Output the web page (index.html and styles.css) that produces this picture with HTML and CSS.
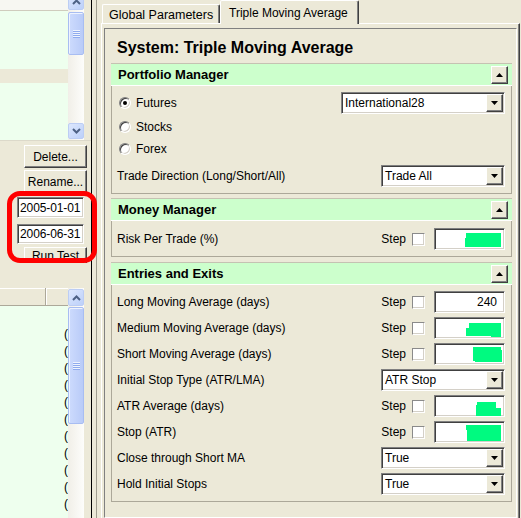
FILE: index.html
```html
<!DOCTYPE html>
<html>
<head>
<meta charset="utf-8">
<title>Triple Moving Average</title>
<link rel="stylesheet" href="styles.css">
</head>
<body>
<div class="app">
  <div class="left">
    <div class="toplist">
      <div class="listcol">
        <div class="lhead"></div>
        <div class="lgreen g1"></div>
        <div class="lgap"></div>
        <div class="lgreen grow"></div>
      </div>
      <div class="vscroll">
        <div class="sbtn cut"><svg width="9" height="6" viewBox="0 0 9 6"><path d="M1 5L4.5 1.5L8 5" fill="none" stroke="#4d6185" stroke-width="2"/></svg></div>
        <div class="thumb th1"><span class="grip"></span></div>
        <div class="grow"></div>
        <div class="sbtn down"><svg width="9" height="6" viewBox="0 0 9 6"><path d="M1 1L4.5 4.5L8 1" fill="none" stroke="#4d6185" stroke-width="2"/></svg></div>
      </div>
      <div class="lrest"></div>
    </div>
    <div class="btns">
      <button class="btn del">Delete...</button>
      <button class="btn ren">Rename...</button>
      <div class="date d1">2005-01-01</div>
      <div class="date d2">2006-06-31</div>
      <div class="runclip"><button class="btn run">Run Test</button></div>
    </div>
    <div class="botlist">
      <div class="listcol2">
        <div class="hdr"><div class="hc1"></div><div class="hc2"></div></div>
        <div class="rows">
          <div class="r">(</div><div class="r">(</div><div class="r">(</div><div class="r">(</div>
          <div class="r">(</div><div class="r">(</div><div class="r">(</div><div class="r">(</div>
          <div class="r">(</div><div class="r">(</div><div class="r">(</div>
        </div>
      </div>
      <div class="vscroll vs2">
        <div class="sbtn up2"><svg width="9" height="6" viewBox="0 0 9 6"><path d="M1 5L4.5 1.5L8 5" fill="none" stroke="#4d6185" stroke-width="2"/></svg></div>
        <div class="thumb th2"><span class="grip"></span></div>
        <div class="grow"></div>
      </div>
      <div class="lrest"></div>
    </div>
  </div>
  <div class="splitter"></div>
  <div class="right">
    <div class="tabs">
      <div class="tab">Global Parameters</div>
      <div class="tab sel">Triple Moving Average</div>
    </div>
    <div class="page">
      <div class="inner">
        <div class="title">System: Triple Moving Average</div>

        <div class="grp gp1">
          <div class="ghead"><span class="gtitle">Portfolio Manager</span><span class="cbtn"><svg width="7" height="4" viewBox="0 0 7 4"><path d="M0 4H7L3.5 0Z" fill="#000"/></svg></span></div>
          <div class="gbody">
            <div class="row pr1"><span class="radio on"></span><span class="lbl">Futures</span>
              <div class="dd wide"><span class="ddtext">International28</span><span class="ddbtn"><svg width="7" height="4" viewBox="0 0 7 4"><path d="M0 0H7L3.5 4Z" fill="#000"/></svg></span></div></div>
            <div class="row pr2"><span class="radio"></span><span class="lbl">Stocks</span></div>
            <div class="row pr3"><span class="radio"></span><span class="lbl">Forex</span></div>
            <div class="row pr4"><span class="lbl">Trade Direction (Long/Short/All)</span>
              <div class="dd"><span class="ddtext">Trade All</span><span class="ddbtn"><svg width="7" height="4" viewBox="0 0 7 4"><path d="M0 0H7L3.5 4Z" fill="#000"/></svg></span></div></div>
          </div>
        </div>

        <div class="grp gp2">
          <div class="ghead"><span class="gtitle">Money Manager</span><span class="cbtn"><svg width="7" height="4" viewBox="0 0 7 4"><path d="M0 4H7L3.5 0Z" fill="#000"/></svg></span></div>
          <div class="gbody b2">
            <div class="row"><span class="lbl">Risk Per Trade (%)</span><span class="step">Step</span><span class="cb"></span>
              <div class="inp"><svg width="69" height="20" viewBox="0 0 69 20"><path d="M31 4H66V18H30V9H31Z" fill="#00fa80"/></svg></div></div>
          </div>
        </div>

        <div class="grp gp3">
          <div class="ghead"><span class="gtitle">Entries and Exits</span><span class="cbtn"><svg width="7" height="4" viewBox="0 0 7 4"><path d="M0 4H7L3.5 0Z" fill="#000"/></svg></span></div>
          <div class="gbody b3">
            <div class="row"><span class="lbl">Long Moving Average (days)</span><span class="step">Step</span><span class="cb"></span>
              <div class="inp num">240</div></div>
            <div class="row"><span class="lbl">Medium Moving Average (days)</span><span class="step">Step</span><span class="cb"></span>
              <div class="inp"><svg width="69" height="20" viewBox="0 0 69 20"><path d="M34 5H66V19H56V18H31V10H34Z" fill="#00fa80"/></svg></div></div>
            <div class="row"><span class="lbl">Short Moving Average (days)</span><span class="step">Step</span><span class="cb"></span>
              <div class="inp"><svg width="69" height="20" viewBox="0 0 69 20"><path d="M38 3H66V6H67V18H40V17H38Z" fill="#00fa80"/></svg></div></div>
            <div class="row"><span class="lbl">Initial Stop Type (ATR/LMA)</span>
              <div class="dd"><span class="ddtext">ATR Stop</span><span class="ddbtn"><svg width="7" height="4" viewBox="0 0 7 4"><path d="M0 0H7L3.5 4Z" fill="#000"/></svg></span></div></div>
            <div class="row"><span class="lbl">ATR Average (days)</span><span class="step">Step</span><span class="cb"></span>
              <div class="inp"><svg width="69" height="20" viewBox="0 0 69 20"><path d="M42 6H61V12H66V20H41V9H42Z" fill="#00fa80"/></svg></div></div>
            <div class="row"><span class="lbl">Stop (ATR)</span><span class="step">Step</span><span class="cb"></span>
              <div class="inp"><svg width="69" height="20" viewBox="0 0 69 20"><path d="M31 3H66V19H32V8H31Z" fill="#00fa80"/></svg></div></div>
            <div class="row"><span class="lbl">Close through Short MA</span>
              <div class="dd"><span class="ddtext">True</span><span class="ddbtn"><svg width="7" height="4" viewBox="0 0 7 4"><path d="M0 0H7L3.5 4Z" fill="#000"/></svg></span></div></div>
            <div class="row"><span class="lbl">Hold Initial Stops</span>
              <div class="dd"><span class="ddtext">True</span><span class="ddbtn"><svg width="7" height="4" viewBox="0 0 7 4"><path d="M0 0H7L3.5 4Z" fill="#000"/></svg></span></div></div>
          </div>
        </div>
      </div>
    </div>
  </div>
</div>
<div class="annot"></div>
</body>
</html>
```
FILE: styles.css
```css
* { box-sizing: border-box; }
html, body { margin: 0; padding: 0; }
body {
  width: 521px;
  height: 518px;
  overflow: hidden;
  position: relative;
  background: #ece9d8;
  font-family: "Liberation Sans", Arial, sans-serif;
  font-size: 12px;
  color: #000;
}
.app { display: flex; height: 518px; }

/* ---------- left panel ---------- */
.left {
  width: 92px;
  border-right: 1px solid #000;
  display: flex;
  flex-direction: column;
  overflow: hidden;
}
.toplist {
  height: 141px;
  display: flex;
  border-bottom: 1px solid #dcd9ca;
}
.listcol { width: 68px; display: flex; flex-direction: column; }
.lhead { height: 11px; background: #f7f7f2; border-bottom: 1px solid #cfccbd; }
.lgreen { background: #eeffee; }
.g1 { height: 58px; }
.lgap { height: 14px; background: #ece9d8; }
.grow { flex: 1; }
.lgreen.grow { flex: 1; }
.lrest { width: 7px; }

.vscroll {
  width: 16px;
  display: flex;
  flex-direction: column;
  overflow: hidden;
  background: linear-gradient(to right, #f1efe8, #fdfdfb);
}
.sbtn {
  width: 16px;
  height: 16px;
  flex: none;
  display: flex;
  align-items: center;
  justify-content: center;
  border: 1px solid #bccdf4;
  border-radius: 2px;
  background: linear-gradient(135deg, #dde7fd, #bcd0fa);
}
.sbtn.cut { height: 17px; margin-top: -7px; }
.sbtn.down { margin-bottom: 1px; }
.sbtn.up2 { height: 17px; margin-top: 1px; }
.thumb {
  flex: none;
  display: flex;
  align-items: center;
  justify-content: center;
  border: 1px solid #a8bdf2;
  border-radius: 2px;
  background: linear-gradient(to right, #cddbfd, #b9cbf8);
  box-shadow: inset 1px 1px #eef3fe;
}
.th1 { height: 43px; margin-top: 2px; }
.th2 { height: 117px; margin-top: 1px; }
.grip {
  width: 7px;
  height: 8px;
  background: repeating-linear-gradient(#eef4fe 0 1px, #8fabee 1px 2px);
}

.btns {
  display: flex;
  flex-direction: column;
  align-items: flex-end;
}
.btn {
  width: 63px;
  height: 23px;
  margin: 0 4px 0 0;
  padding: 0;
  font: 12px "Liberation Sans", Arial, sans-serif;
  color: #000;
  background: #ece9d8;
  border: 1px solid;
  border-color: #fff #404040 #404040 #fff;
  box-shadow: inset -1px -1px #808080;
}
.btn.del { margin-top: 4px; }
.btn.ren { margin-top: 2px; }
.date {
  width: 67px;
  margin-right: 7px;
  padding-left: 2px;
  display: flex;
  align-items: center;
  letter-spacing: -0.1px;
  background: #fff;
  border: 1px solid;
  border-color: #808080 #fff #fff #808080;
  box-shadow: inset 1px 1px #404040, inset -1px -1px #d4d0c8;
}
.d1 { height: 21px; margin-top: 4px; }
.d2 { height: 20px; margin-top: 6px; }
.runclip {
  width: 63px;
  height: 16px;
  margin: 3px 4px 0 0;
  overflow: hidden;
}
.btn.run { height: 18px; margin: 0; }

.botlist {
  flex: 1;
  display: flex;
  margin-top: 25px;
  overflow: hidden;
}
.listcol2 { width: 68px; display: flex; flex-direction: column; overflow: hidden; }
.hdr {
  height: 18px;
  flex: none;
  display: flex;
  background: #ece9d8;
  border-bottom: 1px solid #aca899;
  box-shadow: inset 0 1px #fff;
}
.hc1 { width: 46px; border-right: 1px solid #aca899; }
.hc2 { flex: 1; border-left: 1px solid #fff; }
.rows { flex: 1; background: #eeffee; padding-top: 20px; }
.r {
  height: 17px;
  line-height: 17px;
  padding-left: 64px;
  white-space: nowrap;
}
.vs2 { background: linear-gradient(to right, #f1efe8, #fdfdfb); }

/* ---------- splitter ---------- */
.splitter {
  width: 9px;
  flex: none;
  background: linear-gradient(to right, #ece9d8 0 4px, #a19e90 4px 5px, #ece9d8 5px);
}

/* ---------- right panel ---------- */
.right {
  width: 419px;
  flex: none;
  display: flex;
  flex-direction: column;
}
.tabs {
  height: 23px;
  flex: none;
  display: flex;
  align-items: flex-end;
  padding-left: 1px;
}
.tab {
  height: 19px;
  width: 118px;
  padding-left: 6px;
  padding-top: 1px;
  display: flex;
  align-items: center;
  white-space: nowrap;
  font-size: 12.5px;
  border: 1px solid;
  border-bottom: none;
  border-color: #fff #404040 transparent #fff;
  box-shadow: inset -1px 0 #808080;
  border-radius: 2px 2px 0 0;
}
.tab.sel {
  height: 24px;
  width: 139px;
  padding-left: 8px;
  padding-top: 0;
  margin-bottom: -1px;
  position: relative;
  z-index: 1;
  background: #ece9d8;
  font-size: 12px;
}
.page {
  flex: 1;
  display: flex;
  flex-direction: column;
  padding: 4px 2px 0 2px;
  border-top: 1px solid #fff;
  border-left: 1px solid #fff;
  border-right: 1px solid #404040;
  box-shadow: inset -1px 0 #808080;
}
.inner {
  flex: 1;
  padding: 0 4px 0 6px;
  border: 1px solid;
  border-color: #808080 #fff #fff #808080;
  overflow: hidden;
}
.title {
  padding: 9px 0 0 6px;
  line-height: 19px;
  font-size: 16px;
  font-weight: bold;
}

.grp { width: 401px; }
.gp1 { margin-top: 6px; }
.gp2 { margin-top: 4px; }
.gp3 { margin-top: 5px; }
.ghead {
  height: 23px;
  display: flex;
  align-items: center;
  padding-left: 7px;
  background: #ccffcc;
  border-top: 1px solid #c5c2b2;
  border-bottom: 1px solid #fff;
}
.gtitle { flex: 1; font-size: 13px; font-weight: bold; }
.cbtn {
  width: 17px;
  height: 18px;
  margin-right: 4px;
  display: flex;
  align-items: center;
  justify-content: center;
  background: #ece9d8;
  border: 1px solid;
  border-color: #fff #404040 #404040 #fff;
  box-shadow: inset -1px -1px #808080;
}
.gbody {
  padding: 6px 6px 6px 5px;
  border: 1px solid #aca899;
  border-top: none;
}
.b2 { padding-top: 7px; }
.b3 .row + .row { margin-top: 4px; }

.row { height: 22px; display: flex; align-items: center; }
.pr2 { margin-top: 2px; }
.pr4 { margin-top: 4px; height: 23px; }
.lbl { flex: 1; white-space: nowrap; }

.radio {
  width: 12px;
  height: 12px;
  margin: 0 5px 0 2px;
  border-radius: 50%;
  background: #fff;
  border: 1px solid;
  border-color: #808080 #fff #fff #808080;
  box-shadow: inset 1px 1px #404040, inset -1px -1px #d4d0c8;
  display: flex;
  align-items: center;
  justify-content: center;
}
.radio.on::after {
  content: "";
  width: 4px;
  height: 4px;
  border-radius: 50%;
  background: #000;
}

.step { margin-right: 6px; }
.cb {
  width: 13px;
  height: 13px;
  margin-right: 9px;
  background: #fff;
  border: 1px solid;
  border-color: #8a8a8a #fff #fff #8a8a8a;
  box-shadow: inset -1px -1px #d4d0c8;
}
.inp {
  width: 71px;
  height: 22px;
  background: #fff;
  border: 1px solid;
  border-color: #808080 #fff #fff #808080;
  box-shadow: inset 1px 1px #404040, inset -1px -1px #d4d0c8;
  display: flex;
  align-items: center;
  justify-content: flex-end;
}
.inp svg { display: block; align-self: flex-start; margin-right: auto; }
.inp.num { padding-right: 7px; }

.dd {
  width: 124px;
  height: 22px;
  display: flex;
  align-items: center;
  padding: 1px 1px 1px 3px;
  background: #fff;
  border: 1px solid;
  border-color: #808080 #fff #fff #808080;
  box-shadow: inset 1px 1px #404040, inset -1px -1px #d4d0c8;
}
.dd.wide { width: 164px; }
.ddtext { flex: 1; white-space: nowrap; }
.ddbtn {
  width: 17px;
  height: 18px;
  display: flex;
  align-items: center;
  justify-content: center;
  background: #ece9d8;
  border: 1px solid;
  border-color: #fff #404040 #404040 #fff;
  box-shadow: inset -1px -1px #808080;
}

/* ---------- annotation ---------- */
.annot {
  position: absolute;
  left: 7px;
  top: 191px;
  width: 90px;
  height: 72px;
  border: 5px solid #ff0000;
  border-radius: 13px;
}
```
